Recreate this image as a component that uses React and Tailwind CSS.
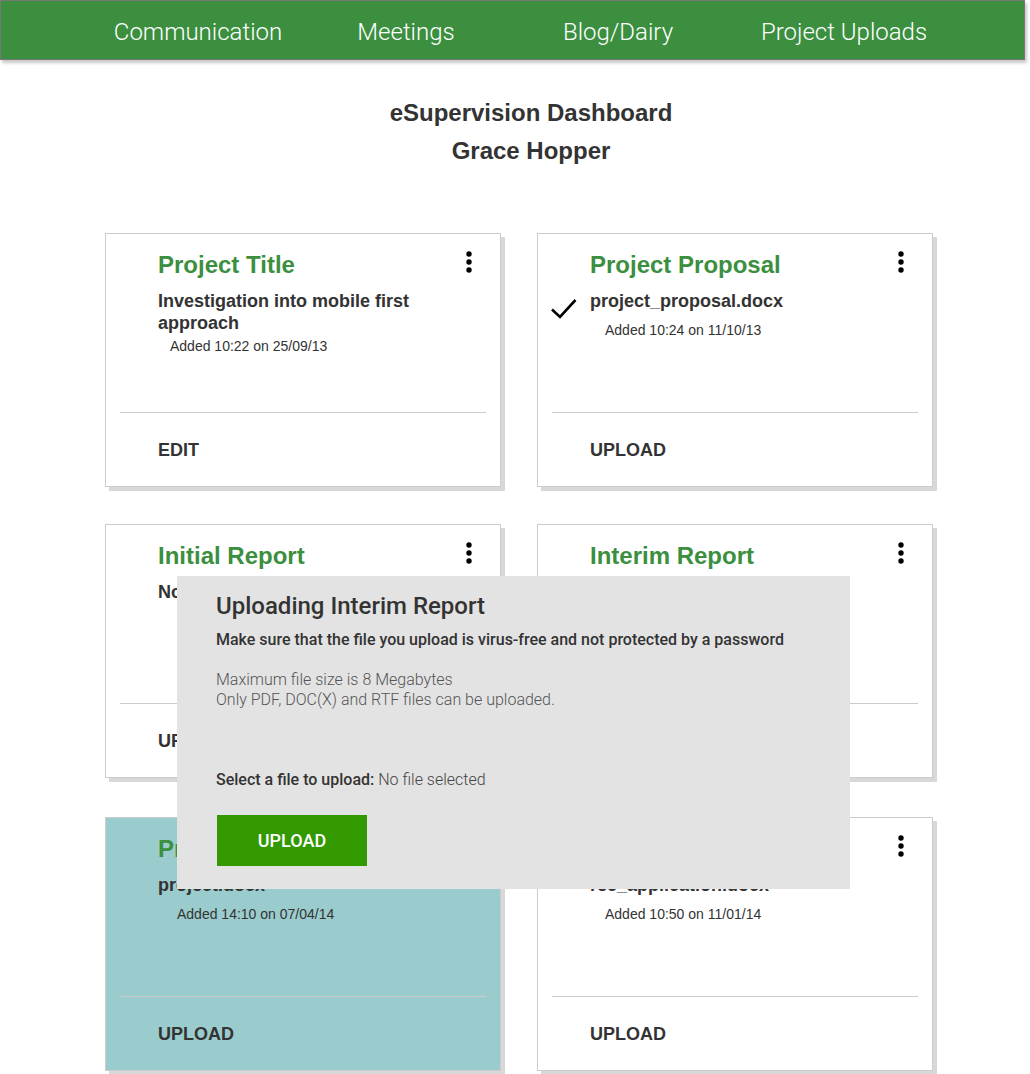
import React from 'react';

const navItems = [
  { label: 'Communication', cls: 'ml-[97px]' },
  { label: 'Meetings', cls: 'ml-[8px]' },
  { label: 'Blog/Dairy', cls: 'ml-[12px]' },
  { label: 'Project Uploads', cls: 'ml-[26px]' },
];

function Dots() {
  return (
    <svg width="10" height="24" viewBox="0 0 10 24" className="absolute top-[16px] right-[26px]">
      <circle cx="5" cy="4" r="2.7" fill="#000" />
      <circle cx="5" cy="12" r="2.7" fill="#000" />
      <circle cx="5" cy="20" r="2.7" fill="#000" />
    </svg>
  );
}

function Check() {
  return (
    <svg width="28" height="22" viewBox="0 0 28 22" className="absolute left-[-40px] top-[7px]">
      <path d="M2 12.5 L10 20 L25.5 3" fill="none" stroke="#000" strokeWidth="2.6" />
    </svg>
  );
}

function Card({ title, lines, date, dateCls, action, check, teal }) {
  return (
    <div
      className={`relative h-[254px] flex flex-col border border-[#cccccc] shadow-[4px_4px_0_#d8d8d8] ${
        teal ? 'bg-[#9acccd]' : 'bg-white'
      }`}
    >
      <Dots />
      <div className="h-[178px] pl-[52px] pr-[60px] pt-[17px]">
        <h2 className="text-[24px] leading-[28px] font-bold text-[#3b8f3e]">{title}</h2>
        <div className="relative mt-[11px]">
          {check && <Check />}
          <p className="text-[18px] leading-[22px] font-bold text-[#333]">{lines}</p>
        </div>
        <p className={`text-[14px] leading-[16px] text-[#333] ${dateCls}`}>{date}</p>
      </div>
      <div className="mx-[14px] border-t border-[#cccccc]" />
      <div className="flex-1 flex items-center pl-[52px] pt-px">
        <span className="text-[18px] font-bold text-[#333]">{action}</span>
      </div>
    </div>
  );
}

export default function App() {
  return (
    <div
      className="relative w-[1030px] h-[1074px] overflow-hidden bg-white"
      style={{ fontFamily: '"Liberation Sans", Arial, sans-serif' }}
    >
      {/* Top navigation */}
      <nav
        className="w-[1025px] h-[60px] flex items-center pt-[3px] bg-[#3b8f3f] border border-[#777] shadow-[2px_3px_3px_rgba(0,0,0,0.22)]"
        style={{ fontFamily: 'Roboto, sans-serif' }}
      >
        {navItems.map((n) => (
          <a key={n.label} className={`w-[200px] text-center text-[24px] font-light text-white ${n.cls}`}>
            {n.label}
          </a>
        ))}
      </nav>

      {/* Heading */}
      <header className="mt-[34px] pl-[32px] text-center text-[24px] leading-[38px] font-bold text-[#333]">
        <h1>eSupervision Dashboard</h1>
        <p>Grace Hopper</p>
      </header>

      {/* Cards */}
      <div className="mt-[63px] ml-[105px] grid grid-cols-[396px_396px] gap-x-[36px]">
        <Card
          title="Project Title"
          lines="Investigation into mobile first approach"
          date="Added 10:22 on 25/09/13"
          dateCls="mt-[4px] ml-[12px]"
          action="EDIT"
        />
        <Card
          title="Project Proposal"
          lines="project_proposal.docx"
          date="Added 10:24 on 11/10/13"
          dateCls="mt-[10px] ml-[15px]"
          action="UPLOAD"
          check
        />
      </div>
      <div className="mt-[37px] ml-[105px] grid grid-cols-[396px_396px] gap-x-[36px]">
        <Card title="Initial Report" lines="No file uploaded" date="" dateCls="" action="UPLOAD" />
        <Card title="Interim Report" lines="No file uploaded" date="" dateCls="" action="UPLOAD" />
      </div>
      <div className="mt-[39px] ml-[105px] grid grid-cols-[396px_396px] gap-x-[36px]">
        <Card
          title="Project Code"
          lines="project.docx"
          date="Added 14:10 on 07/04/14"
          dateCls="mt-[10px] ml-[19px]"
          action="UPLOAD"
          teal
        />
        <Card
          title="Ethics Application"
          lines="rec_application.docx"
          date="Added 10:50 on 11/01/14"
          dateCls="mt-[10px] ml-[15px]"
          action="UPLOAD"
        />
      </div>

      {/* Upload dialog */}
      <div
        className="absolute left-[177px] top-[576px] w-[673px] h-[313px] bg-[#e3e3e3] pl-[39px] pt-[16px] text-[#333] z-10"
        style={{ fontFamily: 'Roboto, sans-serif' }}
      >
        <h3 className="text-[24px] leading-[28px] font-medium">Uploading Interim Report</h3>
        <p className="mt-[10px] text-[16px] leading-[20px] font-medium">
          Make sure that the file you upload is virus-free and not protected by a password
        </p>
        <p className="mt-[20px] text-[16px] leading-[20px] font-light text-[#555]">
          Maximum file size is 8 Megabytes
          <br />
          Only PDF, DOC(X) and RTF files can be uploaded.
        </p>
        <p className="mt-[60px] text-[16px] leading-[20px]">
          <span className="font-medium">Select a file to upload:</span>{' '}
          <span className="font-light text-[#444]">No file selected</span>
        </p>
        <button className="mt-[25px] ml-px w-[150px] h-[51px] bg-[#339900] text-white text-[18px] font-medium">
          UPLOAD
        </button>
      </div>
    </div>
  );
}
